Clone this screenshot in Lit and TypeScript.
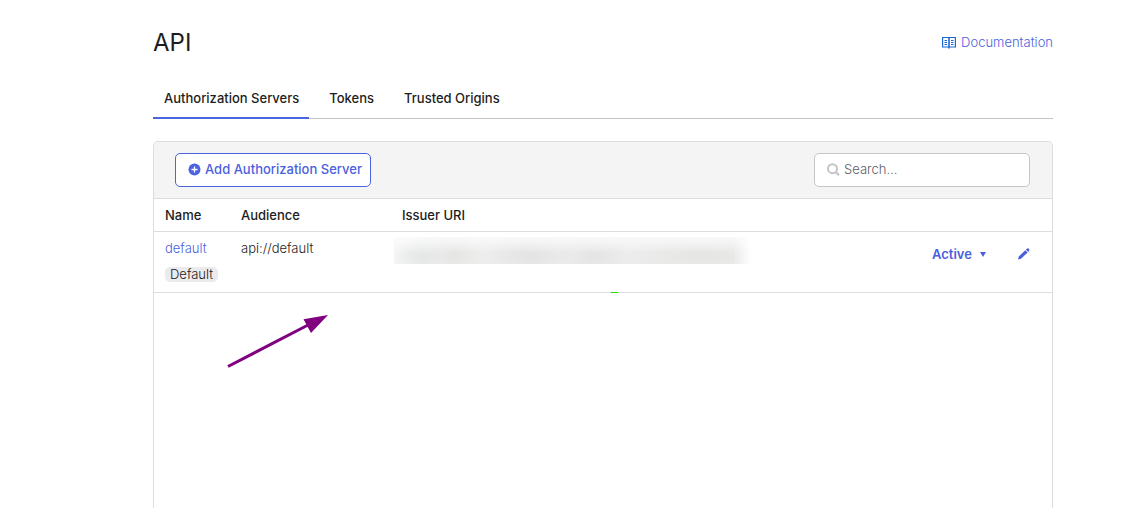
import { LitElement, html, css } from "lit";
import { customElement, state } from "lit/decorators.js";
import { classMap } from "lit/directives/class-map.js";

@customElement("app-root")
export class AppRoot extends LitElement {
  @state() private tab = 0;

  private tabs = ["Authorization Servers", "Tokens", "Trusted Origins"];

  static styles = css`
    :host {
      display: block;
      font-family: Inter, "Liberation Sans", sans-serif;
      font-size: 13px;
      font-weight: 300;
      line-height: 20px;
      color: #1d1d21;
      background: #fff;
    }
    * {
      box-sizing: border-box;
    }
    .page {
      display: flex;
      flex-direction: column;
      height: 100vh;
      overflow: hidden;
      padding: 26px 74px 0 153px;
    }
    a {
      color: #4c5fde;
      text-decoration: none;
    }
    button {
      font: inherit;
      cursor: pointer;
    }
    .head {
      display: flex;
      justify-content: space-between;
      align-items: center;
    }
    h1 {
      margin: 0;
      font-size: 24px;
      line-height: 34px;
      font-weight: 400;
    }
    .docs {
      display: flex;
      align-items: center;
      gap: 5px;
      padding-bottom: 2px;
    }
    .docs svg {
      color: #1f68d6;
    }
    .tabs {
      display: flex;
      margin-top: 19px;
      border-bottom: 1px solid #c4c4c6;
    }
    .tab {
      height: 40px;
      margin-bottom: -1px;
      padding: 0 10px 0 11px;
      border: 0;
      border-bottom: 2px solid transparent;
      background: none;
      color: inherit;
      font-weight: 500;
    }
    .tab + .tab {
      margin-left: 9px;
    }
    .tab.on {
      border-color: #4c64e0;
    }
    .panel {
      position: relative;
      flex: 1;
      margin-top: 22px;
      border: 1px solid #dddddf;
      border-bottom: 0;
      border-radius: 5px 5px 0 0;
    }
    .bar {
      display: flex;
      justify-content: space-between;
      align-items: center;
      padding: 11px 22px 11px 21px;
      background: #f4f4f4;
      border-bottom: 1px solid #dddddf;
      border-radius: 4px 4px 0 0;
    }
    .add {
      display: flex;
      align-items: center;
      gap: 4px;
      height: 34px;
      padding: 0 8px 2px 12px;
      border: 1px solid #4c64e0;
      border-radius: 5px;
      background: #fff;
      color: #4c5fde;
      font-weight: 500;
    }
    .search {
      display: flex;
      align-items: center;
      gap: 4px;
      width: 216px;
      height: 34px;
      padding: 0 12px 2px;
      border: 1px solid #c6c6c8;
      border-radius: 5px;
      background: #fff;
      color: #c4c4c6;
    }
    .search svg {
      flex: none;
    }
    .search input {
      flex: 1;
      min-width: 0;
      padding: 0;
      border: 0;
      outline: 0;
      background: none;
      font: inherit;
      color: #1d1d21;
    }
    .search input::placeholder {
      color: #5c5c64;
      opacity: 1;
    }
    table {
      width: 100%;
      border-collapse: separate;
      border-spacing: 0;
      table-layout: fixed;
    }
    th,
    td {
      padding: 6px 11px;
      text-align: left;
      vertical-align: top;
      border-bottom: 1px solid #dddddf;
    }
    th {
      height: 33px;
      font-weight: 500;
    }
    td {
      height: 61px;
      white-space: nowrap;
    }
    .name {
      width: 76px;
    }
    .audience {
      width: 161px;
    }
    .status {
      width: 86px;
    }
    .edit {
      width: 45px;
    }
    .cell-name {
      display: flex;
      flex-direction: column;
      align-items: flex-start;
      gap: 9px;
    }
    .badge {
      padding: 0 5px;
      line-height: 15px;
      border-radius: 5px;
      background: #ebebed;
    }
    td.issuer {
      padding: 5px 3px;
    }
    .redacted {
      display: block;
      width: 357px;
      max-width: 100%;
      height: 27px;
      background:
        linear-gradient(to right, transparent 95%, #fff 100%),
        linear-gradient(to bottom, rgba(255, 255, 255, 0.7), transparent 60%),
        radial-gradient(ellipse 44px 20px at 38% 68%, #e3e3e3, transparent),
        radial-gradient(ellipse 30px 20px at 8% 72%, #e5e8e7, transparent),
        radial-gradient(ellipse 26px 20px at 17% 68%, #e5e5e3, transparent),
        radial-gradient(ellipse 34px 20px at 56% 72%, #e4e4e4, transparent),
        radial-gradient(ellipse 70px 20px at 86% 68%, #e5e5e3, transparent),
        linear-gradient(to right, #f6f6f6, #ededed 8%, #ececec);
    }
    .plain {
      display: flex;
      align-items: center;
      padding: 0;
      border: 0;
      background: none;
      color: #4c5fde;
      font-weight: 600;
    }
    .status .plain,
    .edit .plain {
      height: 20px;
      margin-top: 6px;
      gap: 8px;
    }
    .arrow {
      position: absolute;
      left: 72px;
      top: 170px;
    }
    .mark {
      position: absolute;
      left: 456px;
      top: 150px;
    }
  `;

  render() {
    return html`
      <main class="page">
        <header class="head">
          <h1>API</h1>
          <a class="docs" href="#docs">
            <svg width="14" height="13" viewBox="0 0 14 13" fill="none" stroke="currentColor">
              <path d="M.6 1.5H13.4V11H.6Z" stroke-width="1.2" />
              <path d="M7 1V12.500" stroke-width="1.6" />
              <path d="M2.500 4.500H5M2.500 6.500H5M2.500 8.500H5M9 4.500H11.500M9 6.500H11.500M9 8.500H11.500" />
            </svg>
            Documentation
          </a>
        </header>
        <nav class="tabs" role="tablist">
          ${this.tabs.map(
            (label, i) => html`<button
              role="tab"
              aria-selected=${i === this.tab}
              class=${classMap({ tab: true, on: i === this.tab })}
              @click=${() => (this.tab = i)}
            >${label}</button>`
          )}
        </nav>
        <section class="panel">
          <div class="bar">
            <button class="add">
              <svg width="13" height="13" viewBox="0 0 13 13">
                <circle cx="6.5" cy="6.5" r="6" fill="#4c64e0" />
                <path d="M6.5 3.5V9.5M3.5 6.5H9.5" stroke="#fff" stroke-width="1.3" />
              </svg>
              Add Authorization Server
            </button>
            <label class="search">
              <svg width="13" height="13" viewBox="0 0 13 13" fill="none" stroke="currentColor">
                <circle cx="5.5" cy="5.7" r="4.5" stroke-width="1.9" />
                <path d="M8.600 8.900L12 12.200" stroke-width="2.2" />
              </svg>
              <input type="text" aria-label="Search" placeholder="Search..." />
            </label>
          </div>
          <table>
            <thead>
              <tr>
                <th class="name">Name</th>
                <th class="audience">Audience</th>
                <th>Issuer URI</th>
                <th class="status"></th>
                <th class="edit"></th>
              </tr>
            </thead>
            <tbody>
              <tr>
                <td>
                  <div class="cell-name">
                    <a href="#default">default</a>
                    <span class="badge">Default</span>
                  </div>
                </td>
                <td>api://default</td>
                <td class="issuer"><span class="redacted"></span></td>
                <td class="status">
                  <button class="plain">
                    Active
                    <svg width="6" height="5" viewBox="0 0 6 5"><path d="M0 0H6L3 5Z" fill="currentColor" /></svg>
                  </button>
                </td>
                <td class="edit">
                  <button class="plain" aria-label="Edit">
                    <svg width="12" height="12" viewBox="0 0 12 12" fill="currentColor">
                      <path d="M0 11.500L.8 8.500 7.300 2.200 9.700 4.400 3 10.800ZM7.900 1.600L9.300.4Q10.200 0 10.900.7 11.600 1.400 11.300 2.400L10.200 3.900Z" />
                    </svg>
                  </button>
                </td>
              </tr>
            </tbody>
          </table>
          <svg class="arrow" width="104" height="58" viewBox="0 0 104 58">
            <path d="M2 54.5L84 12" stroke="#800080" stroke-width="3" />
            <path d="M102 3L77.500 7.300 85 21Z" fill="#800080" />
          </svg>
          <svg class="mark" width="10" height="2" viewBox="0 0 10 2">
            <path d="M0 1L2 0H7L9 1Z" fill="#22e000" />
            <path d="M1 0H8V1H1Z" fill="#22e000" />
          </svg>
        </section>
      </main>
    `;
  }
}
